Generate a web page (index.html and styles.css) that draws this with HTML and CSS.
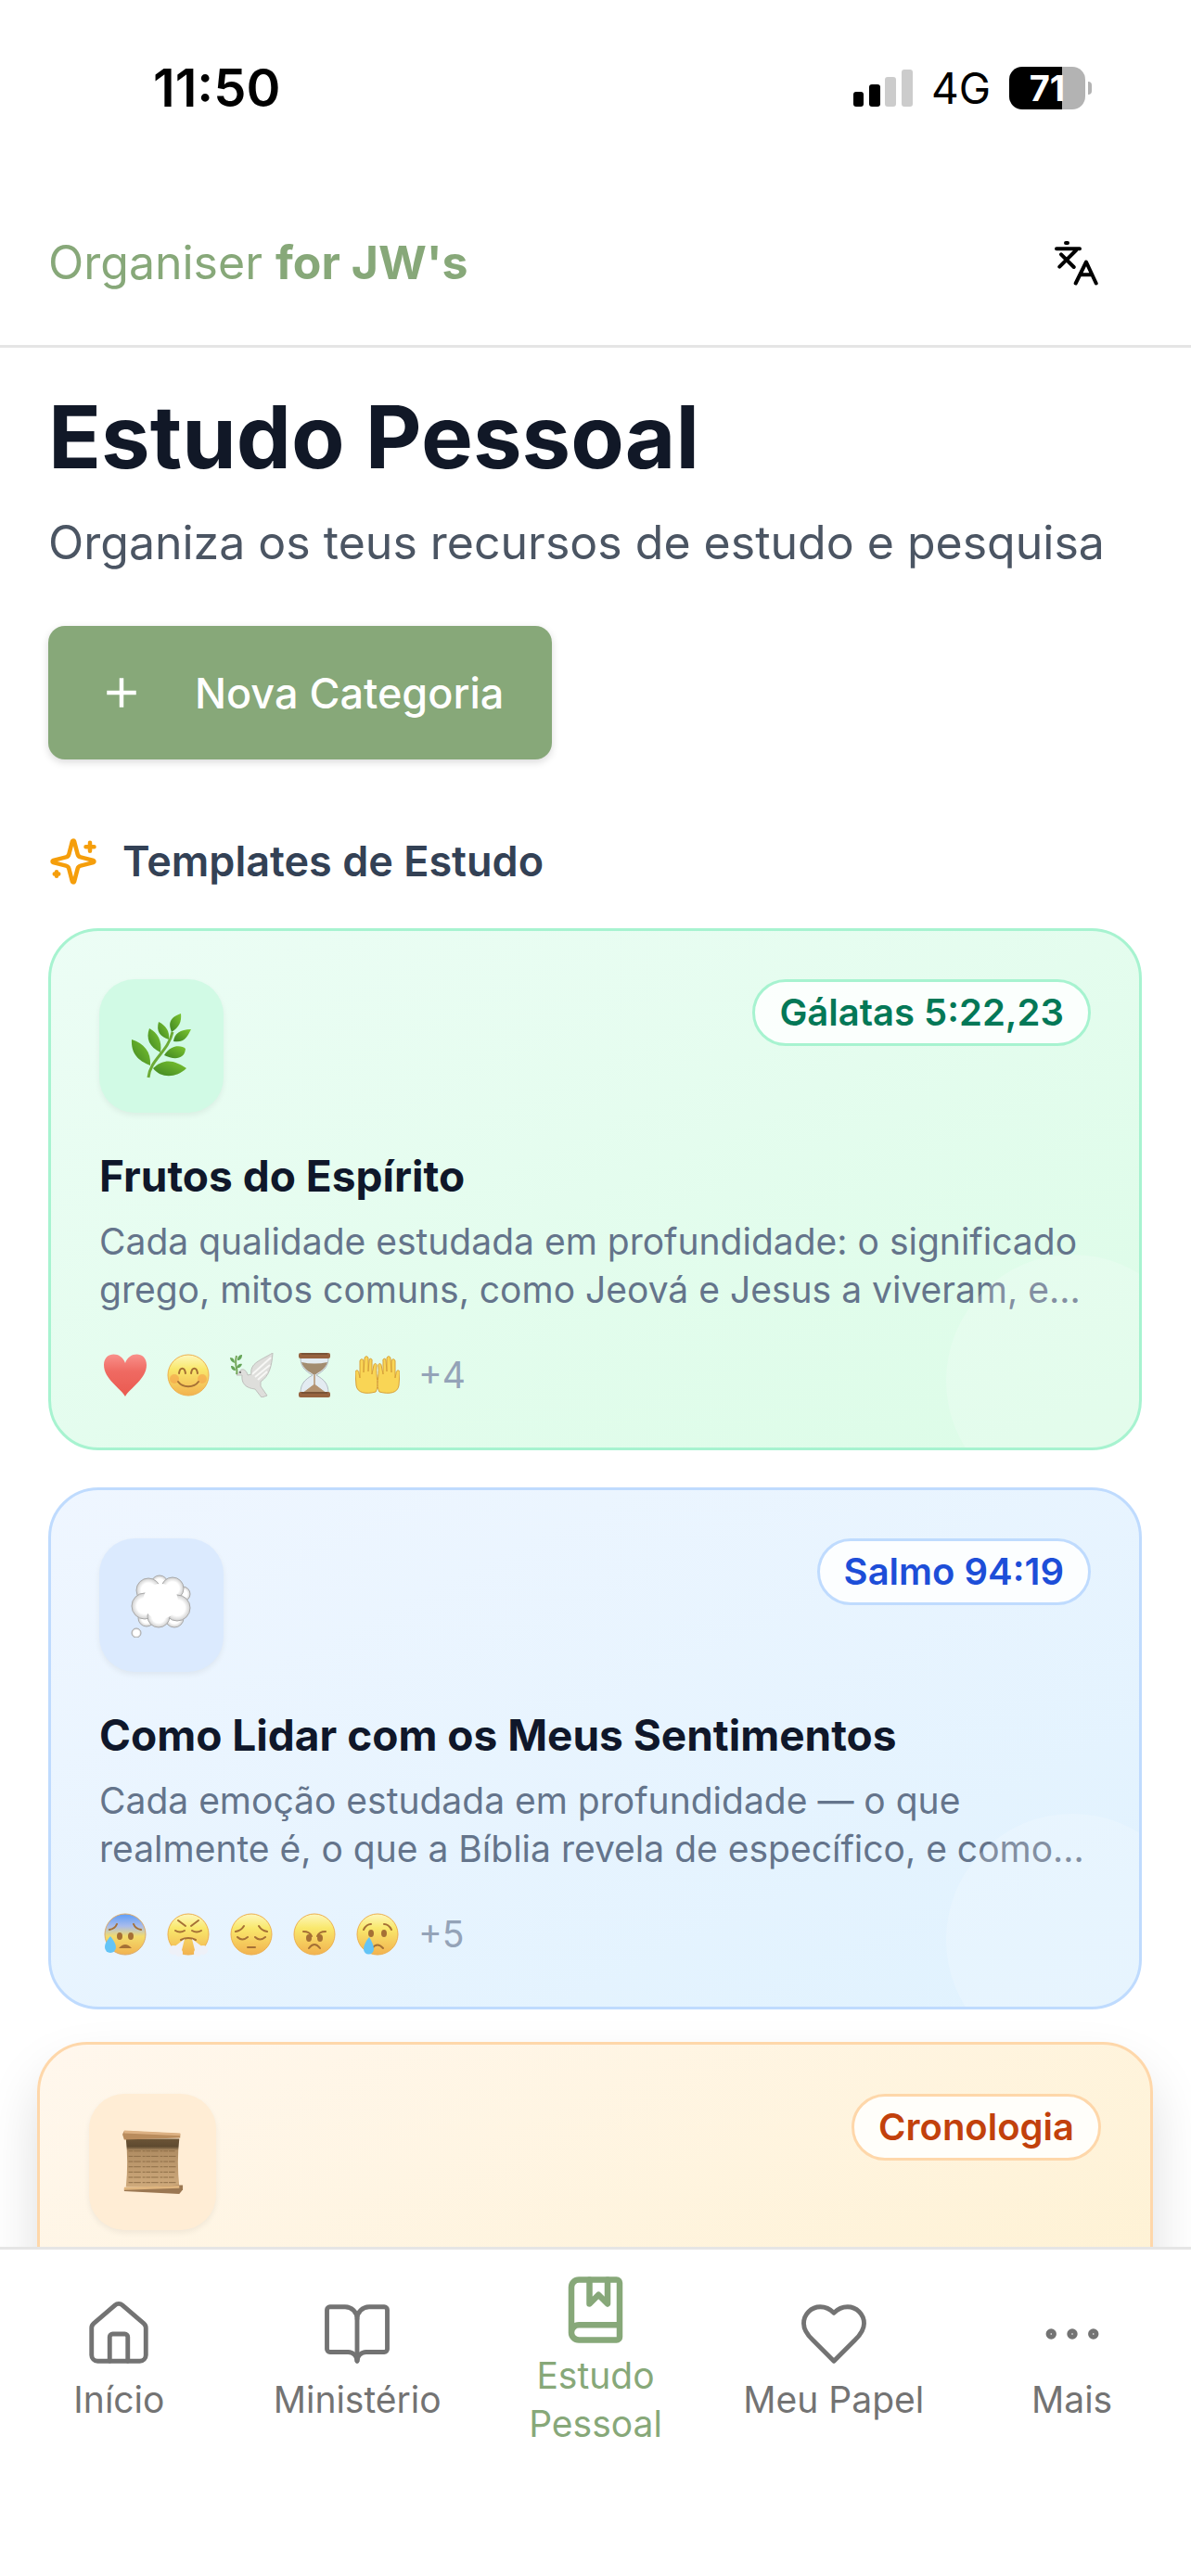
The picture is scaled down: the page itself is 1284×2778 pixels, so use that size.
FILE: index.html
```html
<!DOCTYPE html>
<html lang="pt">
<head>
    <meta charset="UTF-8">
    <meta name="viewport" content="width=device-width, initial-scale=1.0">
    <title>Organiser for JW's</title>
    <link rel="stylesheet" href="styles.css">
</head>
<body>
    <!-- face shading shared by the emoji icons -->
    <svg class="defs" width="0" height="0" aria-hidden="true">
        <defs>
            <linearGradient id="face" x1="0" y1="0" x2="0" y2="1">
                <stop offset="0" stop-color="#fdf7bd"/>
                <stop offset="0.35" stop-color="#f9e86c"/>
                <stop offset="1" stop-color="#f2b24f"/>
            </linearGradient>
            <linearGradient id="faceBlue" x1="0" y1="0" x2="0" y2="1">
                <stop offset="0" stop-color="#5d9df8"/>
                <stop offset="0.3" stop-color="#a9bcec"/>
                <stop offset="0.55" stop-color="#f3dc6c"/>
                <stop offset="1" stop-color="#f2b24f"/>
            </linearGradient>
            <linearGradient id="heartRed" x1="0" y1="0" x2="0" y2="1">
                <stop offset="0" stop-color="#f9908a"/>
                <stop offset="0.4" stop-color="#ef6a62"/>
                <stop offset="1" stop-color="#ea5a50"/>
            </linearGradient>
            <linearGradient id="leaf" x1="1" y1="0" x2="0" y2="1">
                <stop offset="0" stop-color="#7cc62f"/>
                <stop offset="1" stop-color="#3f8423"/>
            </linearGradient>
            <linearGradient id="paper" x1="0" y1="0" x2="0" y2="1">
                <stop offset="0" stop-color="#6d5537"/>
                <stop offset="0.16" stop-color="#5e4a30"/>
                <stop offset="0.24" stop-color="#b08d63"/>
                <stop offset="1" stop-color="#cfaa7c"/>
            </linearGradient>
            <radialGradient id="puff">
                <stop offset="0.6" stop-color="#ffffff"/>
                <stop offset="1" stop-color="#cfcfcf"/>
            </radialGradient>
        </defs>
    </svg>

    <div class="status-bar">
        <span class="time">11:50</span>
        <div class="status-icons">
            <svg class="signal" viewBox="0 0 64 40">
                <rect x="0" y="24" width="11" height="16" rx="3"/>
                <rect x="17" y="16" width="12" height="24" rx="3"/>
                <rect x="34" y="8" width="12" height="32" rx="3" fill="#ccc"/>
                <rect x="52" y="0" width="12" height="40" rx="3" fill="#ccc"/>
            </svg>
            <span class="network">4G</span>
            <div class="battery"><span>71</span></div>
        </div>
    </div>

    <header class="header">
        <a class="brand" href="#">Organiser <strong>for JW's</strong></a>
        <button class="lang-btn" aria-label="Idioma">
            <svg viewBox="0 0 50 50">
                <path d="M14 4h2M4 10.300h25M25 12L7.300 29.700M9 16.300L22.700 30M24.700 47.500L36 24.500L46.700 47.500M29.500 38.300h13"/>
            </svg>
        </button>
    </header>

    <main class="content">
        <h1>Estudo Pessoal</h1>
        <p class="subtitle">Organiza os teus recursos de estudo e pesquisa</p>
        <button class="new-btn">
            <svg viewBox="0 0 24 24"><path d="M5 12h14M12 5v14"/></svg>
            Nova Categoria
        </button>

        <h2>
            <svg viewBox="0 0 24 24">
                <path d="M9.937 15.5A2 2 0 0 0 8.5 14.063l-6.135-1.582a.5.5 0 0 1 0-.962L8.5 9.936A2 2 0 0 0 9.937 8.5l1.582-6.135a.5.5 0 0 1 .963 0L14.063 8.5A2 2 0 0 0 15.5 9.937l6.135 1.581a.5.5 0 0 1 0 .964L15.5 14.063a2 2 0 0 0-1.437 1.437l-1.582 6.135a.5.5 0 0 1-.963 0z"/>
                <path d="M20 3v4M22 5h-4M4 17v2M5 18H3"/>
            </svg>
            Templates de Estudo
        </h2>

        <div class="cards">
            <article class="card green">
                <div class="card-top">
                    <div class="tile">
                        <svg viewBox="0 0 66 70">
                            <path d="M19 69C21 49 40 42 45 20" fill="none" stroke="#6dab36" stroke-width="3"/>
                            <g fill="url(#leaf)">
                                <path d="M54 0C40 5 41 12 44 20C52 15 55 9 54 0z"/>
                                <path d="M30 9C27 20 32 25 41 28C42 19 38 13 30 9z"/>
                                <path d="M20 16C16 27 20 36 32 42C34 29 29 21 20 16z"/>
                                <path d="M65 17C53 17 47 22 46 30C58 32 61 25 65 17z"/>
                                <path d="M1 28C0 43 8 51 21 56C22 41 14 32 1 28z"/>
                                <path d="M36 45C43 33 55 34 59 38C58 50 46 50 36 45z"/>
                                <path d="M24 59C37 47 48 51 60 59C49 70 32 70 24 59z"/>
                            </g>
                        </svg>
                    </div>
                    <span class="badge">Gálatas 5:22,23</span>
                </div>
                <h3>Frutos do Espírito</h3>
                <p>Cada qualidade estudada em profundidade: o significado grego, mitos comuns, como Jeová e Jesus a viveram, e...</p>
                <div class="emojis">
                    <svg viewBox="0 0 48 48"><path d="M24 47C19 38 1 28 1 13C1 -2 20 -2 24 11C28 -2 47 -2 47 13C47 28 29 38 24 47z" fill="url(#heartRed)"/></svg>
                    <svg viewBox="0 0 48 48">
                        <circle cx="24" cy="24" r="22" fill="url(#face)" stroke="#eeb04e"/>
                        <circle cx="9" cy="28" r="5" fill="#f5a24a" opacity="0.6"/><circle cx="39" cy="28" r="5" fill="#f5a24a" opacity="0.6"/>
                        <path d="M14 22c1-7 6-7 7 0M27 22c1-7 6-7 7 0M13 31c5 7 17 7 22 0" class="ink"/>
                    </svg>
                    <svg viewBox="0 0 48 48">
                        <path d="M12 19C15 16 19 19 20 24L24 23C22 11 34 8 47 0C46 15 43 25 34 31L34 36L41 46L35 48L28 39C18 38 13 33 14 24L8 24z" fill="#dededb" stroke="#bfbfbc"/>
                        <path d="M25 23L45 5M28 26L44 13M31 29L41 20" stroke="#f7f7f5" stroke-width="2"/>
                        <path d="M8 23C10 16 5 15 8 3" fill="none" stroke="#75a75a" stroke-width="2"/>
                        <path d="M9 8C9 3 12 2 14 2C14 6 12 8 9 8zM6 11C3 10 1 8 1 5C5 5 6 8 6 11zM8 16C9 12 12 11 14 12C13 15 11 17 8 16zM7 19C4 19 2 17 2 14C5 14 7 16 7 19z" fill="#65a457"/>
                        <circle cx="12" cy="21" r="1" fill="#555"/>
                    </svg>
                    <svg viewBox="0 0 48 48">
                        <path d="M9 5H39C39 14 35 19 26 24C35 29 39 34 39 43H9C9 34 13 29 22 24C13 19 9 14 9 5z" fill="#e3ebf1" stroke="#b3bcc3"/>
                        <path d="M10 10Q24 13 38 10C36 17 30 20 24 24C18 20 12 17 10 10z" fill="#a28c70"/>
                        <path d="M24 24V34L36 43H12L24 34z" fill="#b39270" stroke="#b39270"/>
                        <rect x="7" y="0" width="34" height="6" rx="2" fill="#96623f"/><rect x="7" y="42" width="34" height="6" rx="2" fill="#96623f"/>
                        <path d="M10 1H38M10 43H38" stroke="#5e4431"/>
                    </svg>
                    <svg viewBox="0 0 48 48">
                        <path id="hand" d="M22 42C11 45 2 43 1 35L0 21C0 18 4 18 4 22L5 27L5 9C5 6 9 6 9 9L9 21L10 6C10 3 14 3 14 6L14 20L15 8C15 5 19 6 18 9L18 23L20 13C21 10 24 12 23 15C22 24 26 36 22 42z" fill="#f9d555" stroke="#d8a139"/>
                        <use href="#hand" transform="translate(48 0) scale(-1 1)"/>
                    </svg>
                    <span>+4</span>
                </div>
            </article>

            <article class="card blue">
                <div class="card-top">
                    <div class="tile">
                        <svg viewBox="0 0 66 70">
                            <g fill="url(#puff)" stroke="#a9a9a9">
                                <circle cx="31" cy="12" r="9"/><circle cx="56" cy="23" r="8"/>
                                <circle cx="17" cy="49" r="9"/><circle cx="47" cy="49" r="10"/>
                                <circle cx="19" cy="19" r="13"/><circle cx="45" cy="17" r="12"/>
                                <circle cx="15" cy="36" r="14"/><circle cx="50" cy="38" r="14"/>
                                <circle cx="30" cy="47" r="12"/>
                            </g>
                            <circle cx="32" cy="31" r="19" fill="#fff"/>
                            <circle cx="6" cy="65" r="5" fill="url(#puff)" stroke="#a9a9a9"/>
                        </svg>
                    </div>
                    <span class="badge">Salmo 94:19</span>
                </div>
                <h3>Como Lidar com os Meus Sentimentos</h3>
                <p>Cada emoção estudada em profundidade — o que realmente é, o que a Bíblia revela de específico, e como...</p>
                <div class="emojis">
                    <svg viewBox="0 0 48 48">
                        <circle cx="24" cy="24" r="22" fill="url(#faceBlue)" stroke="#dcab6c"/>
                        <path d="M7 19q6-1 8-6M41 19q-6-1-8-6" class="ink"/>
                        <ellipse cx="18" cy="26" rx="3" ry="4" fill="#a57035"/><ellipse cx="30" cy="26" rx="3" ry="4" fill="#a57035"/>
                        <path d="M17 39q7-8 14 0z" fill="#a57035"/>
                        <path d="M8 26C4 31 2 34 2 38a6 6 0 0 0 12 0C14 34 11 30 8 26z" fill="#63c4f6"/>
                    </svg>
                    <svg viewBox="0 0 48 48">
                        <circle cx="24" cy="24" r="22" fill="url(#face)" stroke="#eeb04e"/>
                        <path d="M13 9l8 6M35 9l-8 6M10 20q5 3 10 0M28 20q5 3 10 0M16 30q8-4 16 0" class="ink"/>
                        <path d="M20 29L16 45H8V38zM28 29L32 45H40V38z" fill="#eef1f8"/>
                        <g fill="#eef1f8"><circle cx="8" cy="41" r="5"/><circle cx="14" cy="44" r="4"/><circle cx="40" cy="41" r="5"/><circle cx="34" cy="44" r="4"/></g>
                    </svg>
                    <svg viewBox="0 0 48 48">
                        <circle cx="24" cy="24" r="22" fill="url(#face)" stroke="#eeb04e"/>
                        <path d="M7 21q6-1 9-6M41 21q-6-1-9-6M9 27q5 5 11 0M28 27q5 5 11 0M20 38h8" class="ink"/>
                    </svg>
                    <svg viewBox="0 0 48 48">
                        <circle cx="24" cy="24" r="22" fill="url(#face)" stroke="#eeb04e"/>
                        <path d="M12 21q7 0 9 5M36 21q-7 0-9 5M18 39q6-8 12 0" class="ink"/>
                        <ellipse cx="18" cy="28" rx="3" ry="4" fill="#a57035"/><ellipse cx="30" cy="28" rx="3" ry="4" fill="#a57035"/>
                    </svg>
                    <svg viewBox="0 0 48 48">
                        <circle cx="24" cy="24" r="22" fill="url(#face)" stroke="#eeb04e"/>
                        <path d="M9 19q3-6 8-6M39 19q-3-6-8-6M18 39q6-7 12 0" class="ink"/>
                        <ellipse cx="17" cy="23" rx="3" ry="4" fill="#a57035"/><ellipse cx="31" cy="23" rx="3" ry="4" fill="#a57035"/>
                        <path d="M15 27C11 32 9 36 9 40a5 5 0 0 0 11 0C20 36 18 32 15 27z" fill="#63c4f6"/>
                    </svg>
                    <span>+5</span>
                </div>
            </article>

            <article class="card orange active">
                <div class="card-top">
                    <div class="tile">
                        <svg viewBox="0 0 70 72">
                            <path d="M4 9H65Q62 35 65 64H4Q7 36 4 9z" fill="url(#paper)"/>
                            <path d="M7 23H60M7 29H61M7 35H60M7 41H61M7 47H60M7 53H59M7 59H61" stroke="#8b6c46" stroke-dasharray="5 1 8 2 3 1"/>
                            <path d="M2 0L66 3V8L2 10L0 4z" fill="#b98c5d"/><path d="M2 1L66 4" stroke="#dcb183" stroke-width="3"/>
                            <path d="M2 66L65 62L69 62V67L65 72L2 69z" fill="#9b7752"/><path d="M2 66L65 64" stroke="#dfb57f" stroke-width="3"/>
                        </svg>
                    </div>
                    <span class="badge">Cronologia</span>
                </div>
            </article>
        </div>
    </main>

    <nav class="bottom-nav">
        <a href="#">
            <svg viewBox="0 0 24 24"><path d="M15 21v-8a1 1 0 0 0-1-1h-4a1 1 0 0 0-1 1v8"/><path d="M3 10a2 2 0 0 1 .709-1.528l7-5.999a2 2 0 0 1 2.582 0l7 5.999A2 2 0 0 1 21 10v9a2 2 0 0 1-2 2H5a2 2 0 0 1-2-2z"/></svg>
            <span>Início</span>
        </a>
        <a href="#">
            <svg viewBox="0 0 24 24"><path d="M12 7v14"/><path d="M3 18a1 1 0 0 1-1-1V4a1 1 0 0 1 1-1h5a4 4 0 0 1 4 4 4 4 0 0 1 4-4h5a1 1 0 0 1 1 1v13a1 1 0 0 1-1 1h-6a3 3 0 0 0-3 3 3 3 0 0 0-3-3z"/></svg>
            <span>Ministério</span>
        </a>
        <a href="#" class="current">
            <svg viewBox="0 0 24 24"><path d="M10 2v8l3-3 3 3V2"/><path d="M4 19.5v-15A2.5 2.5 0 0 1 6.5 2H19a1 1 0 0 1 1 1v18a1 1 0 0 1-1 1H6.500a1 1 0 0 1 0-5H20"/></svg>
            <span>Estudo Pessoal</span>
        </a>
        <a href="#">
            <svg viewBox="0 0 24 24"><path d="M19 14c1.490-1.460 3-3.210 3-5.500A5.500 5.500 0 0 0 16.500 3c-1.760 0-3 .5-4.500 2-1.500-1.500-2.740-2-4.500-2A5.500 5.500 0 0 0 2 8.500c0 2.300 1.500 4.050 3 5.500l7 7Z"/></svg>
            <span>Meu Papel</span>
        </a>
        <a href="#">
            <svg viewBox="0 0 24 24"><circle cx="12" cy="12" r="1"/><circle cx="19" cy="12" r="1"/><circle cx="5" cy="12" r="1"/></svg>
            <span>Mais</span>
        </a>
    </nav>
</body>
</html>
```

FILE: styles.css
```css
* {
    box-sizing: border-box;
}
html, body {
    height: 100%;
}
body {
    font-family: Inter, "Liberation Sans", sans-serif;
    background-color: #fff;
    color: #0f172a;
    margin: 0;
    display: flex;
    flex-direction: column;
    overflow: hidden;
}
svg {
    display: block;
    flex-shrink: 0;
}
.defs {
    position: absolute;
}
.status-bar {
    display: flex;
    justify-content: space-between;
    align-items: center;
    flex-shrink: 0;
    height: 190px;
    padding: 0 114px 0 165px;
    color: #000;
}
.time {
    font-size: 56px;
    font-weight: 600;
}
.status-icons {
    display: flex;
    align-items: center;
    gap: 20px;
}
.signal {
    width: 64px;
    height: 40px;
}
.network {
    font-size: 46px;
}
.battery {
    position: relative;
    width: 82px;
    height: 46px;
    border-radius: 14px;
    background: linear-gradient(to right, #000 70%, #b3b3b3 70%);
    color: #fff;
    font-size: 38px;
    font-weight: 700;
    line-height: 46px;
    text-align: center;
}
.battery::after {
    content: "";
    position: absolute;
    left: 85px;
    top: 16px;
    width: 4px;
    height: 14px;
    border-radius: 0 4px 4px 0;
    background-color: #b3b3b3;
}
.header {
    display: flex;
    justify-content: space-between;
    align-items: center;
    flex-shrink: 0;
    height: 185px;
    padding: 4px 99px 0 52px;
    border-bottom: 3px solid #e5e5e5;
}
.brand {
    color: #87a879;
    font-size: 50px;
    text-decoration: none;
}
.brand strong {
    font-weight: 700;
}
.lang-btn {
    padding: 0;
    border: none;
    background: none;
}
.lang-btn svg {
    width: 50px;
    height: 50px;
    fill: none;
    stroke: #000;
    stroke-width: 4;
    stroke-linecap: round;
    stroke-linejoin: round;
}
.content {
    flex: 1;
    min-height: 0;
    padding: 40px 53px 0 52px;
}
h1 {
    margin: 0;
    font-size: 94px;
    font-weight: 700;
    line-height: 112px;
    color: #111827;
}
.subtitle {
    margin: 18px 0 50px;
    font-size: 50px;
    line-height: 80px;
    color: #4b5563;
}
.new-btn {
    display: flex;
    align-items: center;
    gap: 52px;
    height: 144px;
    padding: 0 52px;
    border: none;
    border-radius: 18px;
    background-color: #87a879;
    color: #fff;
    font-family: inherit;
    font-size: 45px;
    font-weight: 500;
    box-shadow: 0 3px 9px rgba(0, 0, 0, 0.15);
}
.new-btn svg {
    width: 54px;
    height: 54px;
    fill: none;
    stroke: currentColor;
    stroke-width: 2;
}
h2 {
    display: flex;
    align-items: center;
    gap: 26px;
    margin: 72px 0 34px;
    font-size: 45px;
    font-weight: 600;
    line-height: 76px;
    color: #334155;
}
h2 svg {
    width: 54px;
    height: 54px;
    fill: none;
    stroke: #f59e0b;
    stroke-width: 2;
    stroke-linecap: round;
    stroke-linejoin: round;
}
.cards {
    display: flex;
    flex-direction: column;
    gap: 40px;
}
.card {
    position: relative;
    overflow: hidden;
    min-height: 563px;
    padding: 52px 52px 48px;
    border: 3px solid;
    border-radius: 54px;
}
.card::after {
    content: "";
    position: absolute;
    right: -64px;
    bottom: -64px;
    width: 272px;
    height: 272px;
    border-radius: 50%;
    background-color: rgba(255, 255, 255, 0.2);
}
.card-top {
    display: flex;
    justify-content: space-between;
    align-items: flex-start;
}
.tile {
    display: flex;
    align-items: center;
    justify-content: center;
    width: 134px;
    height: 144px;
    border-radius: 38px;
    box-shadow: 0 3px 6px rgba(0, 0, 0, 0.06);
}
.tile svg {
    width: 66px;
    height: 70px;
}
.badge {
    padding: 0 26px;
    border: 3px solid;
    border-radius: 36px;
    background-color: rgba(255, 255, 255, 0.85);
    font-size: 40px;
    font-weight: 600;
    line-height: 66px;
}
.card h3 {
    margin: 40px 0 17px;
    font-size: 46px;
    font-weight: 700;
    line-height: 56px;
}
.card p {
    margin: 0;
    font-size: 39px;
    line-height: 52px;
    color: #64748b;
}
.emojis {
    display: flex;
    align-items: center;
    gap: 20px;
    margin-top: 38px;
    padding-left: 4px;
    color: #94a3b8;
    font-size: 39px;
    line-height: 56px;
}
.emojis svg {
    width: 48px;
    height: 48px;
}
.ink {
    fill: none;
    stroke: #a57035;
    stroke-width: 2;
    stroke-linecap: round;
}
.green {
    border-color: #a7f3d0;
    background: linear-gradient(to bottom right, #ecfdf5, #dcfce7);
}
.green .tile {
    background-color: #d1fae5;
}
.green .badge {
    border-color: #a7f3d0;
    color: #047857;
}
.blue {
    border-color: #bfdbfe;
    background: linear-gradient(to bottom right, #eff6ff, #e0f2fe);
}
.blue .tile {
    background-color: #dbeafe;
}
.blue .badge {
    border-color: #bfdbfe;
    color: #1d4ed8;
}
.orange {
    border-color: #fed7aa;
    background: linear-gradient(to bottom right, #fff7ed, #fef0cb);
}
.orange .tile {
    background-color: #ffedd5;
}
.orange .badge {
    border-color: #fed7aa;
    color: #c2410c;
}
/* the pressed card grows a little */
.card.active {
    margin: -5px -12px 0;
    padding: 53px;
    box-shadow: 0 30px 60px -4px rgba(0, 0, 0, 0.15);
}
.card.active .tile {
    width: 137px;
    height: 147px;
}
.bottom-nav {
    position: fixed;
    left: 0;
    right: 0;
    bottom: 0;
    display: grid;
    grid-template-columns: repeat(5, 1fr);
    padding-bottom: 112px;
    border-top: 3px solid #e5e5e5;
    background-color: #fff;
}
.bottom-nav a {
    display: flex;
    flex-direction: column;
    align-items: center;
    justify-content: center;
    gap: 6px;
    height: 240px;
    padding: 0 28px;
    color: #737373;
    font-size: 39px;
    line-height: 52px;
    text-align: center;
    text-decoration: none;
}
.bottom-nav svg {
    width: 78px;
    height: 78px;
    fill: none;
    stroke: currentColor;
    stroke-width: 1.5;
    stroke-linecap: round;
    stroke-linejoin: round;
}
.bottom-nav .current {
    color: #87a879;
}
.bottom-nav .current svg {
    stroke-width: 2;
}
```
